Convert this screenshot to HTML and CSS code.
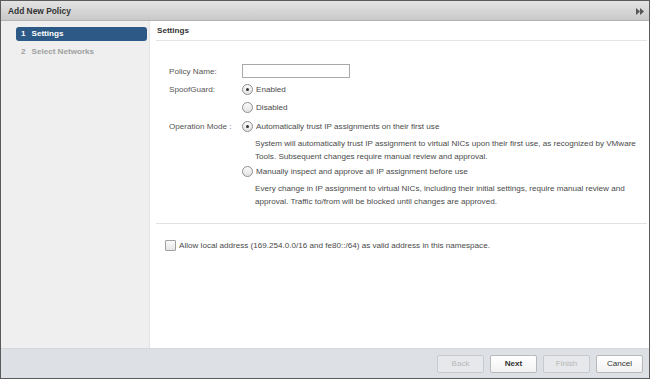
FILE: index.html
```html
<!DOCTYPE html>
<html>
<head>
<meta charset="utf-8">
<link rel="stylesheet" href="styles.css">
</head>
<body>
<div class="dialog">
  <div class="titlebar">
    <span class="title">Add New Policy</span>
    <svg class="expand" width="8" height="7" viewBox="0 0 8 7"><path d="M0 0 L4 3.5 L0 7 Z M4 0 L8 3.5 L4 7 Z" fill="#555"/></svg>
  </div>
  <div class="body">
    <div class="sidebar">
      <div class="step active"><span class="num">1</span>Settings</div>
      <div class="step"><span class="num">2</span>Select Networks</div>
    </div>
    <div class="content">
      <div class="heading">Settings</div>
      <div class="form">
        <div class="row">
          <div class="label">Policy Name:</div>
          <div class="field"><div class="input"></div></div>
        </div>
        <div class="row">
          <div class="label">SpoofGuard:</div>
          <div class="field"><span class="radio checked"></span>Enabled</div>
        </div>
        <div class="row">
          <div class="label"></div>
          <div class="field"><span class="radio"></span>Disabled</div>
        </div>
        <div class="row gap">
          <div class="label">Operation Mode :</div>
          <div class="field"><span class="radio checked"></span>Automatically trust IP assignments on their first use</div>
        </div>
        <div class="desc">System will automatically trust IP assignment to virtual NICs upon their first use, as recognized by VMware Tools. Subsequent changes require manual review and approval.</div>
        <div class="row">
          <div class="label"></div>
          <div class="field"><span class="radio"></span>Manually inspect and approve all IP assignment before use</div>
        </div>
        <div class="desc">Every change in IP assignment to virtual NICs, including their initial settings, require manual review and approval. Traffic to/from will be blocked until changes are approved.</div>
      </div>
      <div class="sep"></div>
      <div class="check-row"><span class="checkbox"></span>Allow local address (169.254.0.0/16 and fe80::/64) as valid address in this namespace.</div>
    </div>
  </div>
  <div class="footer">
    <button class="btn disabled">Back</button>
    <button class="btn primary">Next</button>
    <button class="btn disabled">Finish</button>
    <button class="btn">Cancel</button>
  </div>
</div>
</body>
</html>
```

FILE: styles.css
```css
* { box-sizing: border-box; }
html, body { margin: 0; padding: 0; }
body {
  width: 650px;
  height: 379px;
  font-family: "Liberation Sans", Arial, sans-serif;
  font-size: 8.1px;
  color: #4a4a4a;
  overflow: hidden;
}
.dialog {
  width: 650px;
  height: 379px;
  border: 1px solid #5a5a5a;
  display: flex;
  flex-direction: column;
  background: #fff;
}
.titlebar {
  height: 20px;
  flex: none;
  background: linear-gradient(#e4e4e4, #c8c8c8);
  border-bottom: 1px solid #b3b3b3;
  display: flex;
  align-items: center;
  justify-content: space-between;
  padding: 0 5px 0 7px;
}
.title { font-weight: bold; color: #333; font-size: 8.4px; }
.expand { margin-top: 1px; }
.body {
  flex: 1;
  display: flex;
  min-height: 0;
}
.sidebar {
  width: 149px;
  flex: none;
  background: #efefef;
  border-right: 1px solid #e4e4e4;
  padding: 6px 2px 0 15px;
}
.step {
  height: 14px;
  line-height: 14px;
  font-weight: bold;
  color: #a0a0a0;
  padding-left: 5px;
  margin-bottom: 4px;
}
.step .num { margin-right: 6px; }
.step.active {
  background: #2d5986;
  color: #fff;
  border-radius: 3px;
}
.content {
  flex: 1;
  padding: 0 11px 0 6px;
}
.heading {
  font-weight: bold;
  color: #333;
  height: 20px;
  line-height: 19px;
  padding-left: 1px;
  border-bottom: 1px solid #e4e4e4;
}
.form {
  padding: 21px 0 0 13px;
}
.row {
  display: flex;
  align-items: center;
  height: 18px;
}
.row.gap { margin-top: 1px; }
.label {
  width: 73px;
  flex: none;
  color: #555;
}
.field {
  display: flex;
  align-items: center;
}
.input {
  width: 108px;
  height: 14px;
  border: 1px solid #a9a9a9;
  background: #fff;
}
.radio {
  width: 11px;
  height: 11px;
  border-radius: 50%;
  border: 1px solid #8e8e8e;
  background: linear-gradient(#fbfbfb, #e3e3e3);
  margin-right: 3px;
  flex: none;
  display: inline-flex;
  align-items: center;
  justify-content: center;
}
.radio.checked::after {
  content: "";
  width: 3px;
  height: 3px;
  border-radius: 50%;
  background: #333;
}
.desc {
  margin-left: 86px;
  line-height: 13px;
  width: 392px;
  padding: 2px 0 0;
  height: 27px;
}
.sep {
  height: 1px;
  background: #e2e2e2;
  margin-top: 16px;
}
.check-row {
  display: flex;
  align-items: center;
  height: 14px;
  margin-top: 14px;
  padding-left: 9px;
}
.checkbox {
  width: 11px;
  height: 11px;
  border: 1px solid #a0a0a0;
  background: linear-gradient(#fbfbfb, #e6e6e6);
  border-radius: 1px;
  margin-right: 3px;
  flex: none;
}
.footer {
  height: 30px;
  flex: none;
  background: #dde0e5;
  border-top: 1px solid #d3d6db;
  display: flex;
  align-items: center;
  justify-content: flex-end;
  gap: 6px;
  padding-right: 6px;
}
.btn {
  width: 47px;
  height: 18px;
  padding: 0;
  font-family: "Liberation Sans", Arial, sans-serif;
  font-size: 8.1px;
  color: #333;
  background: linear-gradient(#ffffff, #f2f2f2);
  border: 1px solid #b9b9b9;
  border-radius: 2px;
}
.btn.primary { font-weight: bold; }
.btn.disabled {
  color: #b8b8b8;
  background: #e6e8eb;
  border-color: #c8cacd;
}
```
